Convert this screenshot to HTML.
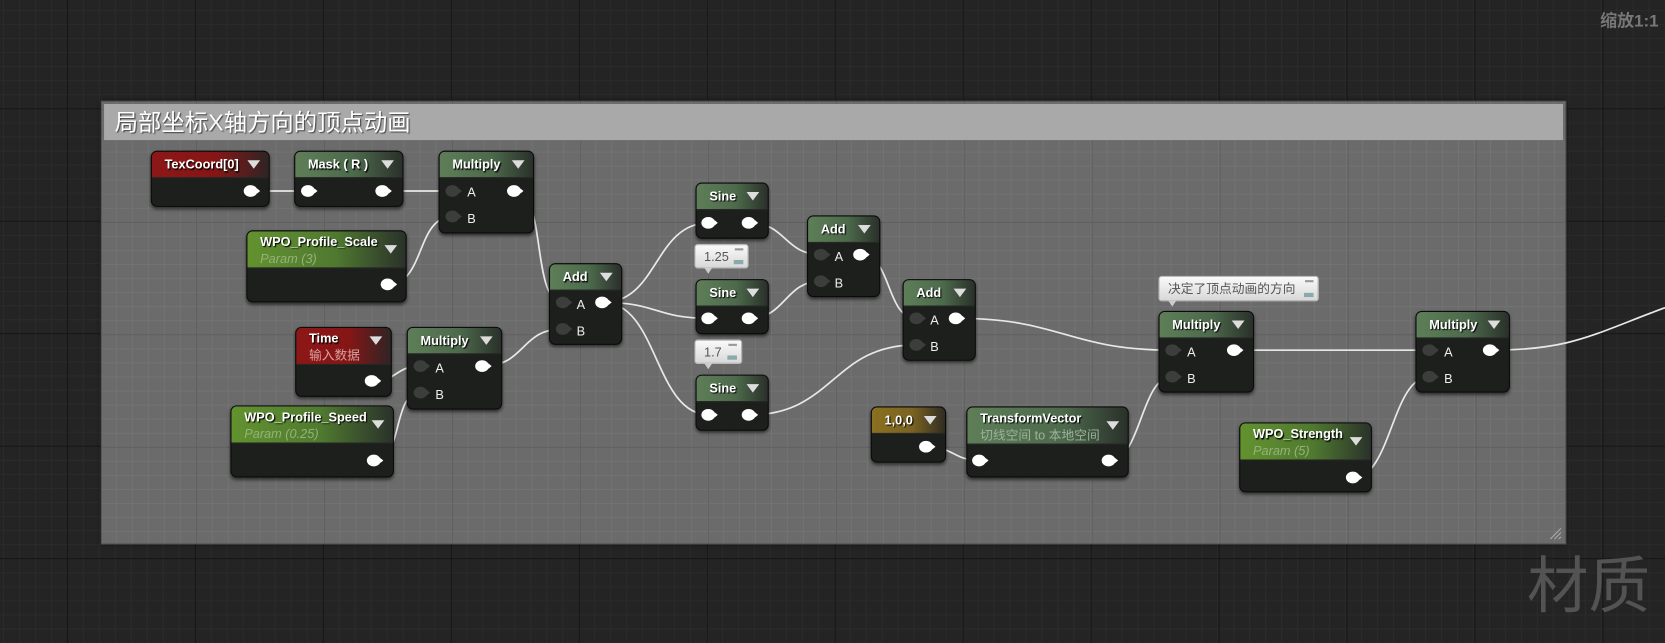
<!DOCTYPE html>
<html><head><meta charset="utf-8"><style>
html,body{margin:0;padding:0;width:1665px;height:643px;overflow:hidden;background:#232323}
#w{position:absolute;left:0;top:0;width:1568px;height:606px;transform:scale(1.06186,1.0611);transform-origin:0 0;
background-color:#242424;
background-image:
linear-gradient(90deg,#141414 1px,transparent 1px),
linear-gradient(0deg,#141414 1px,transparent 1px),
linear-gradient(90deg,#2b2b2b 1px,transparent 1px),
linear-gradient(0deg,#2b2b2b 1px,transparent 1px);
background-size:120.5px 106px,120.5px 106px,15.06px 13.25px,15.06px 13.25px;
background-position:63px 0,0 -3px,63px 0,0 -3px;
font-family:"Liberation Sans","Noto Sans CJK SC",sans-serif}
.fr{position:absolute;left:95px;top:95px;width:1378px;height:416px;background-color:#6b6b6b;
background-image:
linear-gradient(90deg,#5e5e5e 1px,transparent 1px),
linear-gradient(0deg,#5e5e5e 1px,transparent 1px),
linear-gradient(90deg,#737373 1px,transparent 1px),
linear-gradient(0deg,#737373 1px,transparent 1px);
background-size:120.5px 106px,120.5px 106px,15.06px 13.25px,15.06px 13.25px;
background-position:-32px 0,0 -98px,-32px 0,0 -98px;box-shadow:0 0 4px rgba(0,0,0,.6);border:1px solid #555}
.ft{position:absolute;left:2px;top:2px;right:2px;height:34px;background:#a9a9a9;color:#fff;font-size:22px;font-weight:normal;line-height:36px;padding-left:10px;text-shadow:1px 1px 1px #444;box-sizing:border-box}
.n{position:absolute;background:#1d1f1d;border:1px solid #0a0a0a;border-radius:6px;box-shadow:0 2px 3px rgba(0,0,0,.55);overflow:hidden}
.h{position:relative;height:24px;color:#fff;font-weight:bold;font-size:12px;line-height:25px;padding-left:12px;text-shadow:1px 1px 1px #000;border-bottom:1px solid #262826}
.h:after{content:"";position:absolute;right:8px;top:8px;border-left:6px solid transparent;border-right:6px solid transparent;border-top:8px solid #ddd}
.r{background:linear-gradient(90deg,#8d1717 0%,#861616 55%,#2f2424 100%)}
.g{background:linear-gradient(90deg,#5e7e58 0%,#4d6a4c 55%,#2a302a 100%)}
.p{background:linear-gradient(90deg,#62922f 0%,#507a30 55%,#2a322a 100%);height:34px;line-height:20px}
.y{background:linear-gradient(90deg,#8a7020 0%,#7a6322 55%,#302c22 100%)}
.tg{background:linear-gradient(90deg,#5e7e58 0%,#4d6a4c 60%,#2a302a 100%);height:34px;line-height:20px}
.p:after,.tg:after{top:13px}
.s{display:block;font-weight:normal;font-style:italic;font-size:12px;line-height:12px;color:#94b27a;text-shadow:none}
.sr{display:block;font-weight:normal;font-size:12px;line-height:12px;color:#d9a0a0;text-shadow:none}
.st{display:block;font-weight:normal;font-size:12px;line-height:12px;color:#9cb29a;text-shadow:none}
.l{position:absolute;color:#eee;font-size:12px}
.b{position:absolute;background:linear-gradient(#fafafa,#d8d8d8);border:1px solid #bbb;border-radius:3px;color:#555;font-size:12px;line-height:22px;padding-left:8px;box-sizing:border-box}
.b:after{content:"";position:absolute;left:8px;bottom:-6px;border-left:4px solid transparent;border-right:4px solid transparent;border-top:6px solid #ccc}
.b i{position:absolute;right:4px;top:3px;width:8px;height:4px;border-top:2px solid #999}
.b u{position:absolute;right:4px;bottom:3px;width:9px;height:4px;background:#8aa}
svg{position:absolute;left:0;top:0}
</style></head><body><div id="w">
<div style="position:absolute;right:6px;top:6px;color:#777;font-size:16px;font-weight:bold">缩放1:1</div>
<div style="position:absolute;left:1438px;top:518px;color:#535353;font-size:58px;line-height:70px">材质</div>
<div class="fr"><div class="ft">局部坐标X轴方向的顶点动画</div>
<svg width="14" height="14" style="left:1362px;top:400px"><path d="M2 12L12 2M6 12L12 6M10 12L12 10" stroke="#aaa" stroke-width="1"/></svg></div>

<svg width="1568" height="606" fill="none" stroke="#e8e8e8" stroke-width="1.6">
<path d="M237 180L291 180"/><path d="M361 180L426 180"/>
<path d="M366 268C400 268 392 204 426 204"/>
<path d="M485 180C515 180 500 285 530 285"/>
<path d="M351 359C375 359 372 345 396 345"/>
<path d="M353 434C380 434 369 370 396 370"/>
<path d="M455 345C495 345 490 310 530 310"/>
<path d="M568 285C620 285 616 210 668 210"/>
<path d="M568 285C620 285 616 300 668 300"/>
<path d="M568 285C620 285 616 391 668 391"/>
<path d="M706 210C740 210 739 240 773 240"/>
<path d="M706 300C740 300 739 265 773 265"/>
<path d="M811 240C840 240 834 300 863 300"/>
<path d="M706 391C785 391 784 325 863 325"/>
<path d="M901 300C1000 300 1005 330 1104 330"/>
<path d="M873 421C898 421 898 434 923 434"/>
<path d="M1045 434C1075 434 1074 355 1104 355"/>
<path d="M1163 330L1346 330"/>
<path d="M1275 450C1310 450 1311 355 1346 355"/>
<path d="M1404 330C1480 330 1500 315 1568 290"/>
</svg>

<div class="n" style="left:142px;top:142px;width:110px;height:51px"><div class="h r">TexCoord[0]</div></div>
<div class="n" style="left:277px;top:142px;width:101px;height:51px"><div class="h g">Mask ( R )</div></div>
<div class="n" style="left:413px;top:142px;width:88px;height:76px"><div class="h g">Multiply</div><span class="l" style="left:26px;top:31px">A</span><span class="l" style="left:26px;top:56px">B</span></div>
<div class="n" style="left:232px;top:217px;width:149px;height:66px"><div class="h p">WPO_Profile_Scale<span class="s">Param (3)</span></div></div>
<div class="n" style="left:278px;top:308px;width:89px;height:64px"><div class="h r" style="height:34px;line-height:20px">Time<span class="sr">输入数据</span></div></div>
<div class="n" style="left:383px;top:308px;width:88px;height:76px"><div class="h g">Multiply</div><span class="l" style="left:26px;top:31px">A</span><span class="l" style="left:26px;top:56px">B</span></div>
<div class="n" style="left:217px;top:382px;width:152px;height:66px"><div class="h p">WPO_Profile_Speed<span class="s">Param (0.25)</span></div></div>
<div class="n" style="left:517px;top:248px;width:67px;height:75px"><div class="h g">Add</div><span class="l" style="left:25px;top:31px">A</span><span class="l" style="left:25px;top:56px">B</span></div>
<div class="n" style="left:655px;top:172px;width:67px;height:51px"><div class="h g">Sine</div></div>
<div class="n" style="left:655px;top:263px;width:67px;height:50px"><div class="h g">Sine</div></div>
<div class="n" style="left:655px;top:353px;width:67px;height:51px"><div class="h g">Sine</div></div>
<div class="b" style="left:654px;top:230px;width:51px;height:23px">1.25<i></i><u></u></div>
<div class="b" style="left:654px;top:320px;width:45px;height:23px">1.7<i></i><u></u></div>
<div class="n" style="left:760px;top:203px;width:67px;height:75px"><div class="h g">Add</div><span class="l" style="left:25px;top:31px">A</span><span class="l" style="left:25px;top:56px">B</span></div>
<div class="n" style="left:850px;top:263px;width:67px;height:75px"><div class="h g">Add</div><span class="l" style="left:25px;top:31px">A</span><span class="l" style="left:25px;top:56px">B</span></div>
<div class="n" style="left:820px;top:383px;width:69px;height:51px"><div class="h y">1,0,0</div></div>
<div class="n" style="left:910px;top:383px;width:151px;height:65px"><div class="h tg">TransformVector<span class="st">切线空间 to 本地空间</span></div></div>
<div class="b" style="left:1091px;top:260px;width:151px;height:24px">决定了顶点动画的方向<i></i><u></u></div>
<div class="n" style="left:1091px;top:293px;width:88px;height:75px"><div class="h g">Multiply</div><span class="l" style="left:26px;top:31px">A</span><span class="l" style="left:26px;top:56px">B</span></div>
<div class="n" style="left:1167px;top:398px;width:123px;height:64px"><div class="h p">WPO_Strength<span class="s">Param (5)</span></div></div>
<div class="n" style="left:1333px;top:293px;width:87px;height:75px"><div class="h g">Multiply</div><span class="l" style="left:26px;top:31px">A</span><span class="l" style="left:26px;top:56px">B</span></div>

<svg width="1568" height="606">
<defs>
<g id="o"><ellipse cx="0" cy="0" rx="6.5" ry="5.5" fill="#fff"/><path d="M6 -2.5L9 0L6 2.5Z" fill="#fff"/></g>
<g id="i"><ellipse cx="0" cy="0" rx="6.5" ry="5.5" fill="#3c3e3c"/><path d="M6 -2.5L9 0L6 2.5Z" fill="#3c3e3c"/></g>
</defs>
<use href="#o" x="236" y="180"/><use href="#o" x="290" y="180"/><use href="#o" x="360" y="180"/>
<use href="#i" x="426" y="180"/><use href="#i" x="426" y="204"/><use href="#o" x="484" y="180"/>
<use href="#o" x="365" y="268"/><use href="#o" x="350" y="359"/>
<use href="#i" x="396" y="345"/><use href="#i" x="396" y="370"/><use href="#o" x="454" y="345"/>
<use href="#o" x="352" y="434"/>
<use href="#i" x="530" y="285"/><use href="#i" x="530" y="310"/><use href="#o" x="567" y="285"/>
<use href="#o" x="667" y="210"/><use href="#o" x="705" y="210"/>
<use href="#o" x="667" y="300"/><use href="#o" x="705" y="300"/>
<use href="#o" x="667" y="391"/><use href="#o" x="705" y="391"/>
<use href="#i" x="773" y="240"/><use href="#i" x="773" y="265"/><use href="#o" x="810" y="240"/>
<use href="#i" x="863" y="300"/><use href="#i" x="863" y="325"/><use href="#o" x="900" y="300"/>
<use href="#o" x="872" y="421"/><use href="#o" x="922" y="434"/><use href="#o" x="1044" y="434"/>
<use href="#i" x="1104" y="330"/><use href="#i" x="1104" y="355"/><use href="#o" x="1162" y="330"/>
<use href="#o" x="1274" y="450"/>
<use href="#i" x="1346" y="330"/><use href="#i" x="1346" y="355"/><use href="#o" x="1403" y="330"/>
</svg>
</div></body></html>
